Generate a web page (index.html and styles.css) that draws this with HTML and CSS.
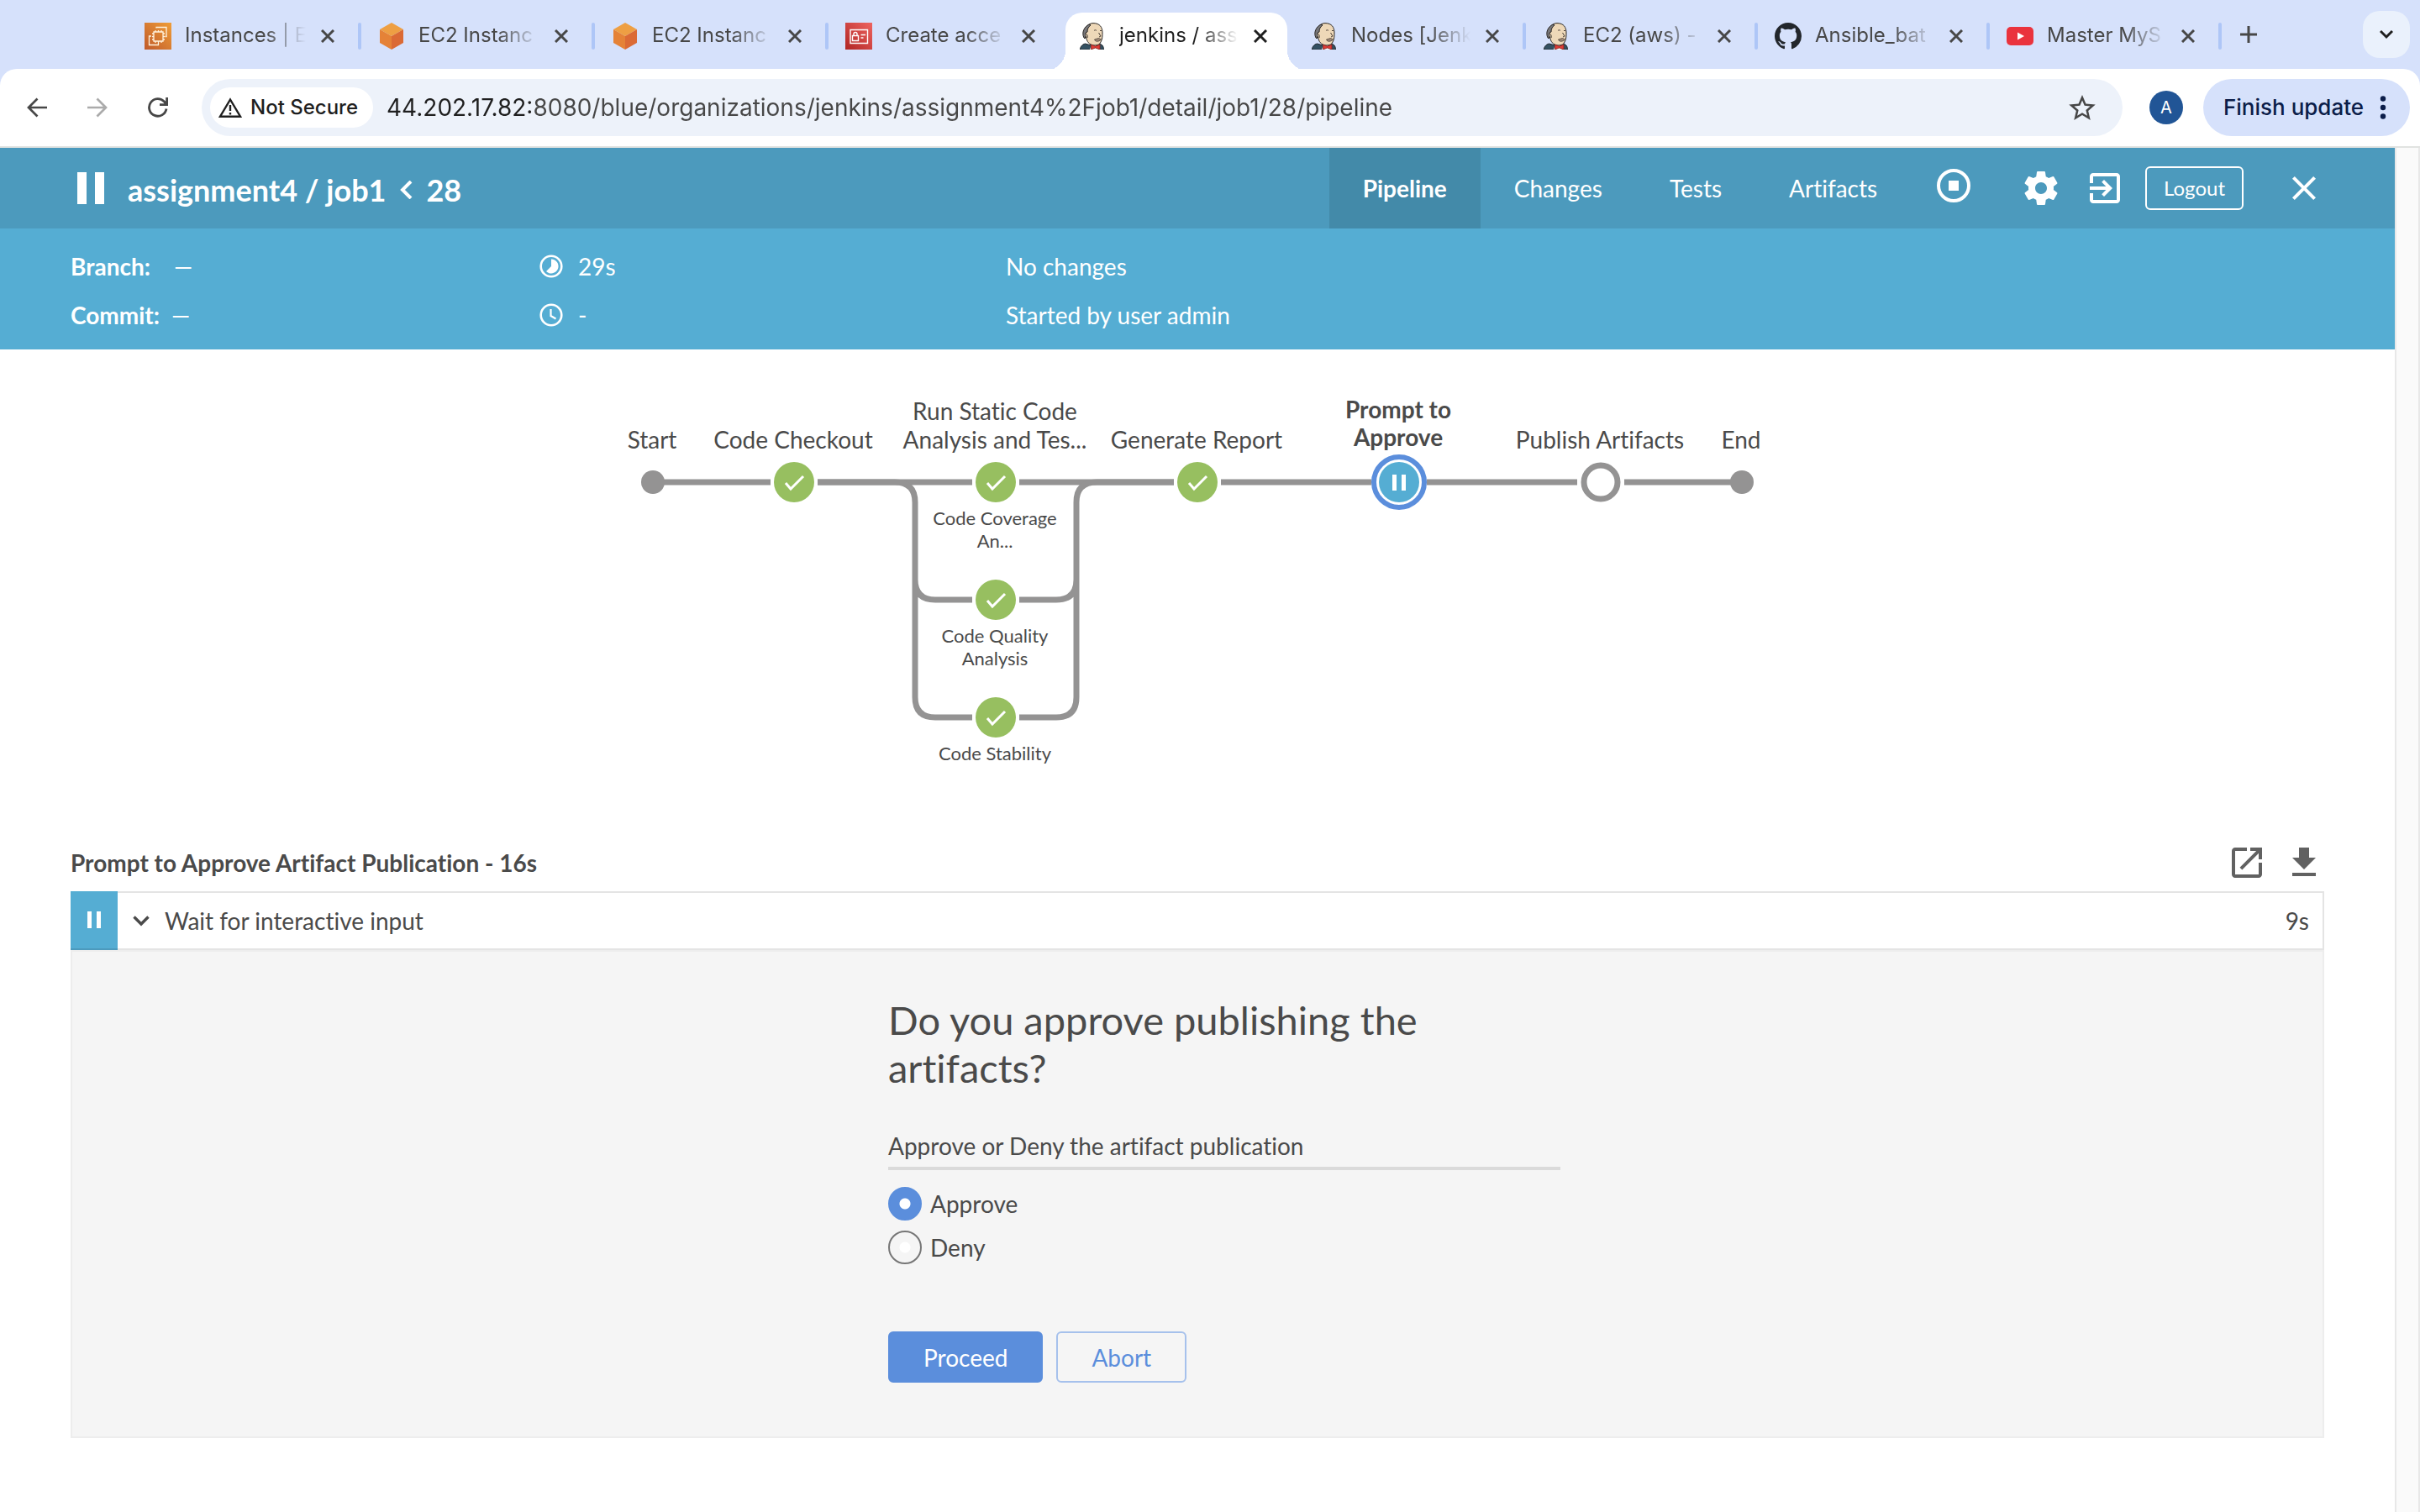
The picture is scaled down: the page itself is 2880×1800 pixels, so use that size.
FILE: index.html
```html
<!DOCTYPE html>
<html lang="en">
<head>
<meta charset="utf-8">
<title>jenkins / assignment4 / job1 / #28</title>
<link rel="stylesheet" href="styles.css">
</head>
<body>
<svg class="defs" aria-hidden="true">
  <defs>
    <linearGradient id="g-orange" x1="0" y1="1" x2="1" y2="0"><stop offset="0" stop-color="#bf5a2b"/><stop offset="1" stop-color="#f09e38"/></linearGradient>
    <linearGradient id="g-red" x1="0" y1="1" x2="1" y2="0"><stop offset="0" stop-color="#b02524"/><stop offset="1" stop-color="#ee6460"/></linearGradient>
    <symbol id="i-close" viewBox="0 0 16 16"><path d="M1 1l14 14M15 1L1 15" fill="none" stroke="currentColor" stroke-width="3"/></symbol>
    <symbol id="i-cube" viewBox="0 0 32 32"><path d="M16 0l14 8-14 8L2 8z" fill="#ee9f43"/><path d="M2 8l14 8v16L2 24z" fill="#e58237"/><path d="M30 8l-14 8v16l14-8z" fill="#db6a35"/></symbol>
    <symbol id="i-jenkins" viewBox="0 0 32 32">
      <path d="M1.500 32c0-3 2-6 6-7l7 2 8-2c5 0 7 3 7 7z" fill="#335061" stroke="#20262c"/>
      <path d="M13 32l2-6 5 1 4 5z" fill="#fff"/>
      <path d="M7 14C7 6 11 .6 17 .6c8 0 11 5 11 11.400 0 3.500 0 8-2 11-1 3-4 4-7 4-5 0-9-3-10-8z" fill="#eed8b8" stroke="#2b2724"/>
      <path d="M6 18C3 12 6 5 12 2l2 1c-3 2-4 5-4 8l-2 1v4l-1 3z" fill="#77777a" stroke="#2b2724"/>
      <path d="M7.500 14c2-1 3 1 2.500 4" fill="#eed8b8" stroke="#2b2724"/>
      <path d="M18 9.500c1-1 2-1 3 0M25 9.500h2M23.500 12l2.500 4-2 1" fill="none" stroke="#4b4038"/>
      <path d="M18.500 20c1 3 5 3 8 0l-3-1.500z" fill="#a08a78" stroke="#4b4038" stroke-width=".8"/>
      <path d="M14.500 26l5 2 5.500-2v6l-5.500-2-5 2z" fill="#dd3b35" stroke="#7e2420" stroke-width=".8"/>
    </symbol>
  </defs>
</svg>

<header class="browser">
  <div class="tabs">
    <div class="tab"><svg class="favicon" viewBox="0 0 32 32"><path fill="url(#g-orange)" d="M0 0h32v32H0z"/><path d="M11 11h11v11H11zM14 6.500V5.500h12v11h-1.500M8 16H5.500v10.500h11V24" fill="none" stroke="#fff3df" stroke-width="1.300"/><path d="M13 9v2m3.500-2v2M20 9v2m-7 11v2m3.500-2v2m3.500-2v2M9 13h2m-2 3.500h2M9 20h2m11-7h2m-2 3.500h2M22 20h2" stroke="#fff3df" stroke-width="1.300"/></svg><span class="tab-title">Instances | E</span><button class="tab-close" aria-label="Close tab"><svg><use href="#i-close"/></svg></button></div>
    <div class="tab"><svg class="favicon"><use href="#i-cube"/></svg><span class="tab-title">EC2 Instanc</span><button class="tab-close" aria-label="Close tab"><svg><use href="#i-close"/></svg></button></div>
    <div class="tab"><svg class="favicon"><use href="#i-cube"/></svg><span class="tab-title">EC2 Instanc</span><button class="tab-close" aria-label="Close tab"><svg><use href="#i-close"/></svg></button></div>
    <div class="tab tab-plain"><svg class="favicon" viewBox="0 0 32 32"><path fill="url(#g-red)" d="M0 0h32v32H0z"/><path d="M6 8.500h20.500v16H6zM8.500 15.500h7v6h-7zM10 15.500v-2a2 2 0 0 1 4 0v2M18.500 14.500H24M18.500 18h3" fill="none" stroke="#fff" stroke-width="1.400"/></svg><span class="tab-title">Create acce</span><button class="tab-close" aria-label="Close tab"><svg><use href="#i-close"/></svg></button></div>
    <div class="tab tab-plain tab-active"><svg class="favicon"><use href="#i-jenkins"/></svg><span class="tab-title">jenkins / ass</span><button class="tab-close" aria-label="Close tab"><svg><use href="#i-close"/></svg></button></div>
    <div class="tab"><svg class="favicon"><use href="#i-jenkins"/></svg><span class="tab-title">Nodes [Jenk</span><button class="tab-close" aria-label="Close tab"><svg><use href="#i-close"/></svg></button></div>
    <div class="tab"><svg class="favicon"><use href="#i-jenkins"/></svg><span class="tab-title">EC2 (aws) -</span><button class="tab-close" aria-label="Close tab"><svg><use href="#i-close"/></svg></button></div>
    <div class="tab"><svg class="favicon" viewBox="0 0 16 16"><path fill="#22262b" d="M8 0C3.580 0 0 3.580 0 8c0 3.540 2.290 6.530 5.470 7.590.4.070.55-.17.55-.38 0-.19-.01-.82-.01-1.490-2.010.37-2.530-.49-2.690-.94-.09-.23-.48-.94-.82-1.130-.28-.15-.68-.52-.01-.53.63-.01 1.080.58 1.230.82.72 1.210 1.870.87 2.330.66.07-.52.28-.87.51-1.070-1.780-.2-3.640-.89-3.640-3.950 0-.87.31-1.590.82-2.150-.08-.2-.36-1.020.08-2.120 0 0 .67-.21 2.200.82.64-.18 1.320-.27 2-.27s1.360.09 2 .27c1.530-1.040 2.200-.82 2.200-.82.44 1.100.16 1.920.08 2.120.51.56.82 1.270.82 2.150 0 3.070-1.870 3.750-3.650 3.950.29.25.54.73.54 1.480 0 1.070-.01 1.930-.01 2.200 0 .21.15.46.55.38A8.010 8.010 0 0 0 16 8c0-4.420-3.580-8-8-8z"/></svg><span class="tab-title">Ansible_bat</span><button class="tab-close" aria-label="Close tab"><svg><use href="#i-close"/></svg></button></div>
    <div class="tab"><svg class="favicon" viewBox="0 0 32 32"><rect y="5" width="32" height="22" rx="5" fill="#ea333d"/><path d="M13 11.500v9l8-4.500z" fill="#fff"/></svg><span class="tab-title">Master MyS</span><button class="tab-close" aria-label="Close tab"><svg><use href="#i-close"/></svg></button></div>
    <button class="tab-new" aria-label="New tab"><svg viewBox="0 0 20 20"><path d="M10 0v20M0 10h20" stroke="currentColor" stroke-width="3"/></svg></button>
    <button class="tab-search" aria-label="Search tabs"><svg viewBox="0 0 16 16"><path d="M1 4l7 7 7-7" fill="none" stroke="currentColor" stroke-width="3"/></svg></button>
  </div>
  <div class="toolbar">
    <div class="nav-buttons">
      <button aria-label="Back"><svg viewBox="0 0 24 24"><path d="M24 12H2M12.500 1.500L2 12l10.500 10.500" fill="none" stroke="currentColor" stroke-width="2.700"/></svg></button>
      <button aria-label="Forward" disabled><svg viewBox="0 0 24 24"><path d="M0 12h22M11.500 1.500L22 12 11.500 22.500" fill="none" stroke="currentColor" stroke-width="2.700"/></svg></button>
      <button aria-label="Reload"><svg viewBox="0 0 24 24"><path d="M22 13.500A10.300 10.300 0 1 1 19.500 5l2.500 3M22.600 0v8.600H14" fill="none" stroke="currentColor" stroke-width="2.800"/></svg></button>
    </div>
    <div class="omnibox">
      <button class="site-chip"><svg viewBox="0 0 28 24"><path d="M14 2.500L26 22.700H2z" fill="none" stroke="currentColor" stroke-width="2.400"/><path d="M14 9v7M14 18v2.600" stroke="currentColor" stroke-width="2.400"/></svg>Not Secure</button>
      <input class="address" type="text" aria-label="Address" value="44.202.17.82:8080/blue/organizations/jenkins/assignment4%2Fjob1/detail/job1/28/pipeline">
      <button class="star" aria-label="Bookmark this page"><svg viewBox="2 2 20 19"><path fill="currentColor" d="M22 9.240l-7.190-.62L12 2 9.190 8.630 2 9.240l5.460 4.730L5.820 21 12 17.270 18.180 21l-1.630-7.030L22 9.240zM12 15.400l-3.760 2.270 1-4.280-3.320-2.880 4.380-.38L12 6.100l1.710 4.040 4.380.38-3.320 2.880 1 4.280L12 15.400z"/></svg></button>
    </div>
    <button class="avatar" aria-label="Profile">A</button>
    <button class="update">Finish update<svg viewBox="0 0 8 28"><circle cx="4" cy="3.500" r="3.200"/><circle cx="4" cy="14" r="3.200"/><circle cx="4" cy="24.500" r="3.200"/></svg></button>
  </div>
</header>

<div class="viewport">
  <main class="page">
    <header class="run-bar">
      <svg class="run-pause" viewBox="0 0 32 38"><path d="M0 0h11v38H0zM21 0h11v38H21z"/></svg>
      <h1 class="run-title"><a href="#">assignment4 / job1</a><svg viewBox="0 0 16 22"><path d="M14 1L4 11l10 10" fill="none" stroke="#fff" stroke-width="4"/></svg><span>28</span></h1>
      <nav class="run-nav">
        <a class="current" href="#">Pipeline</a><a href="#">Changes</a><a href="#">Tests</a><a href="#">Artifacts</a>
      </nav>
      <button class="icon stop" aria-label="Stop"><svg viewBox="0 0 48 48"><circle cx="24" cy="21" r="18" fill="none" stroke="currentColor" stroke-width="4"/><path d="M18 15h12v12H18z" fill="currentColor"/></svg></button>
      <button class="icon settings" aria-label="Settings"><svg viewBox="0 0 24 24"><path fill="currentColor" d="M19.430 12.980c.04-.32.07-.64.07-.98s-.03-.66-.07-.98l2.110-1.650c.19-.15.24-.42.12-.64l-2-3.460c-.12-.22-.39-.3-.61-.22l-2.490 1c-.52-.4-1.080-.73-1.690-.98l-.38-2.650C14.460 2.180 14.250 2 14 2h-4c-.25 0-.46.18-.49.42l-.38 2.650c-.61.25-1.170.59-1.690.98l-2.490-1c-.23-.09-.49 0-.61.22l-2 3.460c-.13.22-.07.49.12.64l2.110 1.650c-.04.32-.07.65-.07.98s.03.66.07.98l-2.110 1.650c-.19.15-.24.42-.12.64l2 3.460c.12.22.39.3.61.22l2.490-1c.52.4 1.080.73 1.690.98l.38 2.650c.03.24.24.42.49.42h4c.25 0 .46-.18.49-.42l.38-2.650c.61-.25 1.170-.59 1.690-.98l2.490 1c.23.09.49 0 .61-.22l2-3.460c.12-.22.07-.49-.12-.64l-2.110-1.650zM12 15.500c-1.930 0-3.500-1.570-3.500-3.500s1.570-3.500 3.500-3.500 3.500 1.570 3.500 3.500-1.570 3.500-3.500 3.500z"/></svg></button>
      <button class="icon exit" aria-label="Go to classic"><svg viewBox="0 0 24 24"><path fill="currentColor" d="M10.090 15.590L11.500 17l5-5-5-5-1.410 1.410L12.670 11H3v2h9.670l-2.580 2.590zM19 3H5c-1.110 0-2 .9-2 2v4h2V5h14v14H5v-4H3v4c0 1.100.89 2 2 2h14c1.100 0 2-.9 2-2V5c0-1.100-.9-2-2-2z"/></svg></button>
      <button class="logout">Logout</button>
      <button class="icon" aria-label="Close"><svg viewBox="0 0 24 24"><path fill="currentColor" d="M19 6.410L17.590 5 12 10.590 6.410 5 5 6.410 10.590 12 5 17.590 6.410 19 12 13.410 17.590 19 19 17.590 13.410 12z"/></svg></button>
    </header>
    <section class="run-info">
      <div class="info-col">
        <p><b>Branch:</b><span class="dash wide">—</span></p>
        <p><b>Commit:</b><span class="dash">—</span></p>
      </div>
      <div class="info-col">
        <p class="timed"><svg viewBox="0 0 28 28"><circle cx="14" cy="14" r="12.300" fill="none" stroke="#fff" stroke-width="2.600"/><path d="M14 5.500a8.500 8.500 0 1 1-6 14.500l6-6z" fill="#fff"/></svg>29s</p>
        <p class="timed"><svg viewBox="0 0 28 28"><circle cx="14" cy="14" r="12.300" fill="none" stroke="#fff" stroke-width="2.600"/><path d="M13.500 7v8l6 3.500" fill="none" stroke="#fff" stroke-width="2.200"/></svg>-</p>
      </div>
      <div class="info-col">
        <p>No changes</p>
        <p>Started by user admin</p>
      </div>
    </section>

    <section class="graph">
      <svg viewBox="0 0 1500 560" width="1500" height="560">
        <g class="wire">
          <path d="M102 158H242M298 158H482M538 158H722M778 158H957M1023 158H1202M1258 158H1398"/>
          <path d="M298 158H390Q414 158 414 182V274Q414 298 438 298H482M390 158Q414 158 414 182V414Q414 438 438 438H482"/>
          <path d="M722 158H630Q606 158 606 182V274Q606 298 582 298H538M630 158Q606 158 606 182V414Q606 438 582 438H538"/>
        </g>
        <g class="terminal"><circle cx="102" cy="158" r="14"/><circle cx="1398" cy="158" r="14"/></g>
        <g class="passed"><circle cx="270" cy="158" r="24"/><circle cx="510" cy="158" r="24"/><circle cx="750" cy="158" r="24"/><circle cx="510" cy="298" r="24"/><circle cx="510" cy="438" r="24"/></g>
        <path class="ticks" d="M260 159l6 7 15-15M500 159l6 7 15-15M740 159l6 7 15-15M500 299l6 7 15-15M500 439l6 7 15-15"/>
        <circle class="focus-ring" cx="990" cy="158" r="30"/><circle class="paused" cx="990" cy="158" r="24"/>
        <path fill="#fff" d="M982 149h5v19h-5zM993 149h5v19h-5z"/>
        <circle class="pending" cx="1230" cy="158" r="20"/>
        <g class="stage">
          <text x="101" y="118">Start</text>
          <text x="269" y="118">Code Checkout</text>
          <text x="509" y="84">Run Static Code</text><text x="509" y="118">Analysis and Tes...</text>
          <text x="749" y="118">Generate Report</text>
          <text class="selected" x="989" y="82">Prompt to</text><text class="selected" x="989" y="115">Approve</text>
          <text x="1229" y="118">Publish Artifacts</text>
          <text x="1397" y="118">End</text>
        </g>
        <g class="branch">
          <text x="509" y="209">Code Coverage</text><text x="509" y="236">An...</text>
          <text x="509" y="349">Code Quality</text><text x="509" y="376">Analysis</text>
          <text x="509" y="489">Code Stability</text>
        </g>
      </svg>
    </section>

    <section class="steps">
      <header class="steps-head">
        <h2>Prompt to Approve Artifact Publication - 16s</h2>
        <button class="icon" aria-label="Open log in new window"><svg viewBox="0 0 24 24"><path fill="currentColor" d="M19 19H5V5h7V3H5c-1.110 0-2 .9-2 2v14c0 1.100.89 2 2 2h14c1.100 0 2-.9 2-2v-7h-2v7zM14 3v2h3.590l-9.830 9.830 1.410 1.410L19 6.410V10h2V3h-7z"/></svg></button>
        <button class="icon" aria-label="Download log"><svg viewBox="0 0 24 24"><path fill="currentColor" d="M19 9h-4V3H9v6H5l7 7 7-7zM5 18v2h14v-2H5z"/></svg></button>
      </header>
      <div class="step">
        <span class="step-status"><svg viewBox="0 0 16 20"><path fill="#fff" d="M0 0h5v20H0zM11 0h5v20h-5z"/></svg></span>
        <svg class="step-chevron" viewBox="0 0 20 14"><path d="M1.500 2.500L10 11l8.500-8.500" fill="none" stroke="currentColor" stroke-width="3.400"/></svg>
        <span class="step-name">Wait for interactive input</span>
        <span>9s</span>
      </div>
      <div class="step-body">
        <form class="prompt">
          <h3>Do you approve publishing the artifacts?</h3>
          <fieldset>
            <legend>Approve or Deny the artifact publication</legend>
            <label><input type="radio" name="decision" checked>Approve</label>
            <label><input type="radio" name="decision">Deny</label>
          </fieldset>
          <div class="actions">
            <button class="primary" type="button">Proceed</button>
            <button class="secondary" type="button">Abort</button>
          </div>
        </form>
      </div>
    </section>
  </main>
  <div class="scrollbar"></div>
</div>
</body>
</html>
```

FILE: styles.css
```css
* { box-sizing: border-box; }
body {
  margin: 0;
  min-height: 100vh;
  display: flex;
  flex-direction: column;
  background: #fff;
  color: #4a4a4a;
  font: 28px/34px Lato, sans-serif;
  font-variant-ligatures: none;
}
h1, h2, h3, p, fieldset, legend { margin: 0; padding: 0; border: 0; }
button { margin: 0; padding: 0; border: 0; background: none; color: inherit; font: inherit; font-variant-ligatures: none; display: flex; align-items: center; justify-content: center; flex: none; }
a { color: inherit; text-decoration: none; }
svg { display: block; flex: none; }
.defs { position: absolute; width: 0; height: 0; }

/* Browser window */
.browser { background: #d6e1fb; font-family: Inter, sans-serif; color: #474747; }
.tabs { display: flex; align-items: center; height: 82px; padding: 0 12px 0 150px; }
.tab { position: relative; flex: 0 1 276px; min-width: 0; height: 54px; display: flex; align-items: center; padding: 0 30px 0 22px; margin-top: 3px; font-size: 24px; line-height: 30px; }
.tab:nth-child(-n+4) { flex-basis: 278px; }
.tab::after { content: ""; position: absolute; right: -2px; top: 11px; width: 4px; height: 32px; border-radius: 2px; background: #aec6f7; }
.tab-plain::after { display: none; }
.favicon { width: 32px; height: 32px; }
.tab-title { flex: 1; margin: 0 14px 0 16px; padding-bottom: 2px; overflow: hidden; white-space: nowrap; -webkit-mask-image: linear-gradient(to left, transparent 4px, #000 54px); mask-image: linear-gradient(to left, transparent 4px, #000 54px); }
.tab-close svg { width: 16px; height: 16px; }
.tab-close { width: 16px; }
.tab-active { color: #1f1f1f; z-index: 0; }
.tab-active::before { content: ""; position: absolute; z-index: -1; left: 6px; right: 6px; top: -1px; bottom: -15px; border-radius: 20px 20px 0 0; background: #fff; }
.tab-active::after { display: block; z-index: -1; left: -18px; right: -18px; width: auto; height: 24px; top: 44px; border-radius: 0; background: radial-gradient(circle at 0 0, transparent 24px, #fff 24px) left / 24px 24px no-repeat, radial-gradient(circle at 24px 0, transparent 24px, #fff 24px) right / 24px 24px no-repeat; }
.tab-new { width: 68px; height: 54px; }
.tab-new svg { width: 20px; height: 20px; }
.tab-search { width: 56px; height: 56px; margin-left: auto; border-radius: 20px; background: #eaf1fc; color: #1f1f1f; }
.tab-search svg { width: 16px; height: 16px; }

.toolbar { display: flex; align-items: center; height: 94px; padding: 0 12px 0 8px; background: #fff; border-radius: 20px 20px 0 0; border-bottom: 2px solid #e1e3e1; }
.nav-buttons { display: flex; margin-right: 16px; }
.nav-buttons button { width: 72px; height: 68px; }
.nav-buttons button:disabled { color: #ababab; }
.nav-buttons svg { width: 24px; height: 24px; }
.omnibox { flex: 1; display: flex; align-items: center; height: 68px; padding: 0 32px 0 10px; border-radius: 34px; background: #edf2fa; }
.site-chip { justify-content: flex-start; gap: 10px; width: 194px; height: 48px; padding-left: 10px; border-radius: 24px; background: #fff; color: #1f1f1f; font-size: 24px; font-weight: 500; }
.site-chip svg { width: 28px; height: 24px; }
.address { flex: 1; min-width: 0; margin: 0; padding: 0 0 0 16px; border: 0; outline: 0; font: 28px/36px Inter, sans-serif; color: transparent; background: linear-gradient(to right, #1f1f1f 192px, #474747 192px); -webkit-background-clip: text; background-clip: text; }
.star svg { width: 32px; height: 30px; }
.avatar { width: 40px; height: 40px; margin: 0 24px 0 32px; border-radius: 50%; background: #215596; color: #fff; font-size: 20px; }
.update { justify-content: space-between; width: 246px; height: 68px; padding: 0 28px 0 24px; border-radius: 34px; background: #d6e1fb; color: #0b1d49; font-size: 26px; font-weight: 500; }
.update svg { width: 8px; height: 28px; fill: currentColor; }

/* Page and its scrollbar gutter */
.viewport { flex: 1; display: flex; }
.page { flex: 1; min-width: 0; }
.scrollbar { width: 30px; background: #fafafa; border: solid #e8e8e8; border-width: 0 2px; }
.icon { width: 48px; height: 48px; }
.icon svg { width: 48px; height: 48px; }

/* Run header */
.run-bar { display: flex; align-items: center; height: 96px; padding: 0 84px 0 92px; background: #4c9abd; color: #fff; }
.run-pause { width: 32px; height: 38px; fill: #fff; }
.run-title { display: flex; align-items: center; margin-left: 28px; padding-top: 4px; font-size: 36px; line-height: 44px; font-weight: 700; }
.run-title svg { width: 16px; height: 22px; margin: 0 16px; }
.run-nav { display: flex; align-self: stretch; margin: 0 27px 0 auto; }
.run-nav a { display: flex; align-items: center; padding: 0 40px; }
.run-nav .current { background: #438aa9; font-weight: 700; }
.stop { margin-right: 56px; }
.settings { margin-right: 28px; }
.exit { margin-right: 24px; }
.logout { height: 52px; padding: 0 20px; margin-right: 48px; border: 2px solid #fff; border-radius: 6px; font-size: 24px; }

.run-info { display: grid; grid-template-columns: 558fr 555fr 1569fr; padding: 28px 84px 24px; background: #55add3; color: #fff; }
.info-col { display: grid; gap: 24px; }
.dash { margin-left: 14px; }
.dash.wide { margin-left: 28px; }
.timed { display: flex; align-items: center; gap: 18px; }
.timed svg { width: 28px; height: 28px; }

/* Pipeline graph */
.graph { display: flex; justify-content: center; }
.wire { fill: none; stroke: #949393; stroke-width: 7; }
.terminal { fill: #949393; }
.passed { fill: #97bf60; }
.ticks { fill: none; stroke: #fff; stroke-width: 3; }
.focus-ring { fill: #fff; stroke: #5b8edc; stroke-width: 6; }
.paused { fill: #55add3; }
.pending { fill: #fff; stroke: #949393; stroke-width: 7; }
.graph text { fill: #4a4a4a; text-anchor: middle; }
.stage { font-size: 28px; }
.stage .selected { font-weight: 700; }
.branch { font-size: 22px; }

/* Steps */
.steps { padding: 27px 84px 0; }
.steps-head { display: flex; align-items: center; gap: 20px; margin-bottom: 10px; color: #616161; }
.steps-head h2 { flex: 1; font-size: 28px; font-weight: 700; color: #4a4a4a; }
.step { display: flex; align-items: center; height: 70px; padding-right: 16px; border: 2px solid #e4e4e4; border-left: 0; }
.step-status { display: flex; align-items: center; justify-content: center; width: 56px; height: 70px; background: #55add3; border-bottom: 2px solid #4c9abd; }
.step-status svg { width: 16px; height: 20px; }
.step-chevron { width: 20px; height: 14px; margin: 0 18px; }
.step-name { flex: 1; }
.step-body { padding: 53px 0 64px; background: #f5f5f5; border: 2px solid #ededed; }
.prompt { width: 864px; max-width: 100%; margin: 0 auto; padding-left: 64px; }
.prompt h3 { padding-right: 100px; font-size: 47px; line-height: 57px; font-weight: 400; margin-bottom: 47px; }
.prompt legend { width: 100%; padding-bottom: 8px; margin-bottom: 20px; border-bottom: 4px solid #dadada; }
.prompt label { display: flex; align-items: center; gap: 10px; height: 40px; margin-bottom: 12px; }
.prompt input { appearance: none; flex: none; width: 40px; height: 40px; margin: 0; border: 2px solid #777; border-radius: 50%; background: radial-gradient(circle, #fff 6px, transparent 7px); }
.prompt input:checked { border-color: #5b8edc; background: radial-gradient(circle, #fff 6px, #5b8edc 7px); }
.actions { display: flex; gap: 16px; margin-top: 68px; }
.actions button { height: 61px; padding: 0 40px; border: 2px solid #5b8edc; border-radius: 6px; }
.primary { background: #5b8edc; color: #fff; }
.actions .secondary { border-color: #a6c1ec; color: #5b8edc; }
```
